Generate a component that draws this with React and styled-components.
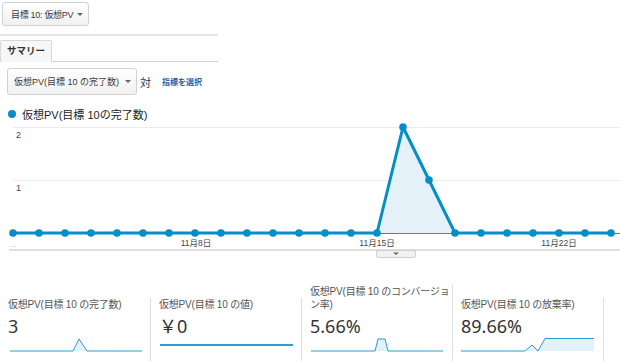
import React from "react";
import styled, { createGlobalStyle } from "styled-components";

const GlobalStyle = createGlobalStyle`
  html, body { margin: 0; padding: 0; background: #fff; }
  body {
    font-family: "Liberation Sans", "Noto Sans CJK JP", sans-serif;
    color: #333;
  }
`;

const BLUE = "#058dc7";
const FILL = "#e4f1f9";

const Page = styled.div`
  width: 620px;
  height: 361px;
  overflow: hidden;
`;

const TopBar = styled.div`
  display: flex;
  padding: 2px 0 0 2px;
`;

const SelectButton = styled.div`
  display: flex;
  align-items: center;
  box-sizing: border-box;
  width: ${(p) => p.$w}px;
  height: ${(p) => p.$h}px;
  padding-left: ${(p) => p.$pad}px;
  border: 1px solid #d2d2d2;
  border-radius: 3px;
  background: linear-gradient(#ffffff, #f1f1f1);
  font-size: ${(p) => p.$fs}px;
  letter-spacing: ${(p) => p.$ls || 0}px;
  color: #3a3a3a;
`;

const SelectLabel = styled.span`
  flex: 1;
  white-space: nowrap;
`;

const Caret = styled.span`
  width: 0;
  height: 0;
  border-left: 3px solid transparent;
  border-right: 3px solid transparent;
  border-top: 3px solid #666;
  margin-right: ${(p) => p.$mr}px;
`;

const Rule = styled.div`
  margin-top: 8px;
  width: 218px;
  height: 2px;
  background: #e6e6e6;
`;

const TabBar = styled.div`
  display: flex;
  margin-top: 4px;
  width: 218px;
  height: 22px;
  box-sizing: border-box;
  border-bottom: 1px solid #d4d4d4;
`;

const Tab = styled.div`
  box-sizing: border-box;
  width: 52px;
  height: 22px;
  padding-left: 6px;
  border: 1px solid #d8d8d8;
  border-bottom: 1px solid #f7f7f7;
  border-radius: 2px 2px 0 0;
  background: #f7f7f7;
  font-size: 9.5px;
  font-weight: bold;
  line-height: 20px;
  color: #333;
`;

const ControlRow = styled.div`
  display: flex;
  align-items: center;
  margin-top: 6px;
  padding-left: 7px;
`;

const Versus = styled.span`
  margin-left: 3px;
  font-size: 11px;
  color: #333;
`;

const Link = styled.a`
  margin-left: 11px;
  font-size: 8px;
  font-weight: bold;
  color: #2a5caa;
  text-decoration: none;
`;

const Legend = styled.div`
  display: flex;
  align-items: center;
  margin-top: 12px;
  height: 14px;
  padding-left: 8px;
`;

const LegendDot = styled.span`
  width: 8px;
  height: 8px;
  border-radius: 50%;
  background: ${BLUE};
`;

const LegendText = styled.span`
  margin-left: 6px;
  font-size: 11px;
  color: #222;
  white-space: nowrap;
`;

const ChartSvg = styled.svg`
  display: block;
  width: 620px;
  height: 140px;
`;

const MetricsRow = styled.div`
  display: flex;
  align-items: flex-end;
  margin-top: 24px;
`;

const MetricCell = styled.div`
  box-sizing: border-box;
  width: 151px;
  padding: 0 0 2px 8px;
  border-right: 1px solid #dedede;
`;

const MetricTitle = styled.div`
  font-size: 10px;
  line-height: 13px;
  letter-spacing: -0.2px;
  color: #555;
`;

const MetricValue = styled.div`
  margin-top: 4px;
  font-family: "Noto Sans", "Noto Sans CJK JP", sans-serif;
  font-size: 18px;
  line-height: 22px;
  color: #333;
`;

const Spark = styled.svg`
  display: block;
  width: 136px;
  height: 22px;
`;

const values = Array.from({ length: 24 }, (_, i) => (i === 15 ? 2 : i === 16 ? 1 : 0));
const px = (i) => 13 + 26 * i;
const py = (v) => 112 - 53 * v;

function Chart() {
  const pts = values.map((v, i) => `${px(i)},${py(v)}`).join(" ");
  const area = `${px(0)},112 ${pts} ${px(23)},112`;
  return (
    <ChartSvg viewBox="0 0 620 140">
      <line x1="13" y1="6.5" x2="620" y2="6.5" stroke="#ececec" />
      <line x1="13" y1="59.5" x2="620" y2="59.5" stroke="#ececec" />
      <text x="16" y="17" fontSize="9" fill="#444" fontFamily="Liberation Sans, sans-serif">2</text>
      <text x="16" y="70" fontSize="9" fill="#444" fontFamily="Liberation Sans, sans-serif">1</text>
      <polygon points={area} fill={FILL} />
      <line x1="13" y1="112.5" x2="620" y2="112.5" stroke="#777" />
      <polyline points={pts} fill="none" stroke={BLUE} strokeWidth="3" strokeLinejoin="round" />
      {values.map((v, i) => (
        <circle key={i} cx={px(i)} cy={py(v)} r="3.8" fill={BLUE} />
      ))}
      <g fontSize="8.5" fill="#444" textAnchor="middle" fontFamily="Liberation Sans, Noto Sans CJK JP, sans-serif">
        <text x="196" y="124.5">11月8日</text>
        <text x="377" y="124.5">11月15日</text>
        <text x="559" y="124.5">11月22日</text>
      </g>
      <text x="10" y="126" fontSize="7" fill="#a98">...</text>
      <rect x="9" y="128" width="611" height="2" fill="#e0e0e0" />
      <rect x="376.5" y="129.5" width="39" height="7" rx="1.5" fill="#f2f2f2" stroke="#cfcfcf" />
      <polygon points="393,131.5 399,131.5 396,134" fill="#666" />
    </ChartSvg>
  );
}

function Sparkline({ points, fill = true, width = 1 }) {
  const line = points.map((p) => p.join(",")).join(" ");
  const first = points[0];
  const last = points[points.length - 1];
  const poly = `${first[0]},14 ${line} ${last[0]},14`;
  return (
    <Spark viewBox="0 0 136 22">
      {fill && <polygon points={poly} fill={FILL} />}
      <polyline points={line} fill="none" stroke={BLUE} strokeWidth={width} opacity="0.85" />
    </Spark>
  );
}

const metrics = [
  {
    title: "仮想PV(目標 10 の完了数)",
    value: "3",
    points: [[2, 14], [65, 14], [71, 2], [79, 14], [134, 14]],
  },
  {
    title: "仮想PV(目標 10 の値)",
    value: "￥0",
    points: [[1, 8], [134, 8]],
    fill: false,
    width: 2,
  },
  {
    title: "仮想PV(目標 10 のコンバージョン率)",
    value: "5.66%",
    points: [[1, 14], [65, 14], [68, 2], [75, 2], [78, 14], [133, 14]],
  },
  {
    title: "仮想PV(目標 10 の放棄率)",
    value: "89.66%",
    points: [[0, 14], [64, 14], [71, 8], [77, 14], [84, 1.5], [133, 1.5]],
  },
];

export default function App() {
  return (
    <Page>
      <GlobalStyle />
      <TopBar>
        <SelectButton $w={87} $h={24} $pad={8} $fs={9} $ls={-0.3}>
          <SelectLabel>目標 10: 仮想PV</SelectLabel>
          <Caret $mr={5} />
        </SelectButton>
      </TopBar>
      <Rule />
      <TabBar>
        <Tab>サマリー</Tab>
      </TabBar>
      <ControlRow>
        <SelectButton $w={130} $h={27} $pad={6} $fs={9}>
          <SelectLabel>仮想PV(目標 10 の完了数)</SelectLabel>
          <Caret $mr={5} />
        </SelectButton>
        <Versus>対</Versus>
        <Link href="#">指標を選択</Link>
      </ControlRow>
      <Legend>
        <LegendDot />
        <LegendText>仮想PV(目標 10の完了数)</LegendText>
      </Legend>
      <Chart />
      <MetricsRow>
        {metrics.map((m) => (
          <MetricCell key={m.title}>
            <MetricTitle>{m.title}</MetricTitle>
            <MetricValue>{m.value}</MetricValue>
            <Sparkline points={m.points} fill={m.fill !== false} width={m.width || 1} />
          </MetricCell>
        ))}
      </MetricsRow>
    </Page>
  );
}
